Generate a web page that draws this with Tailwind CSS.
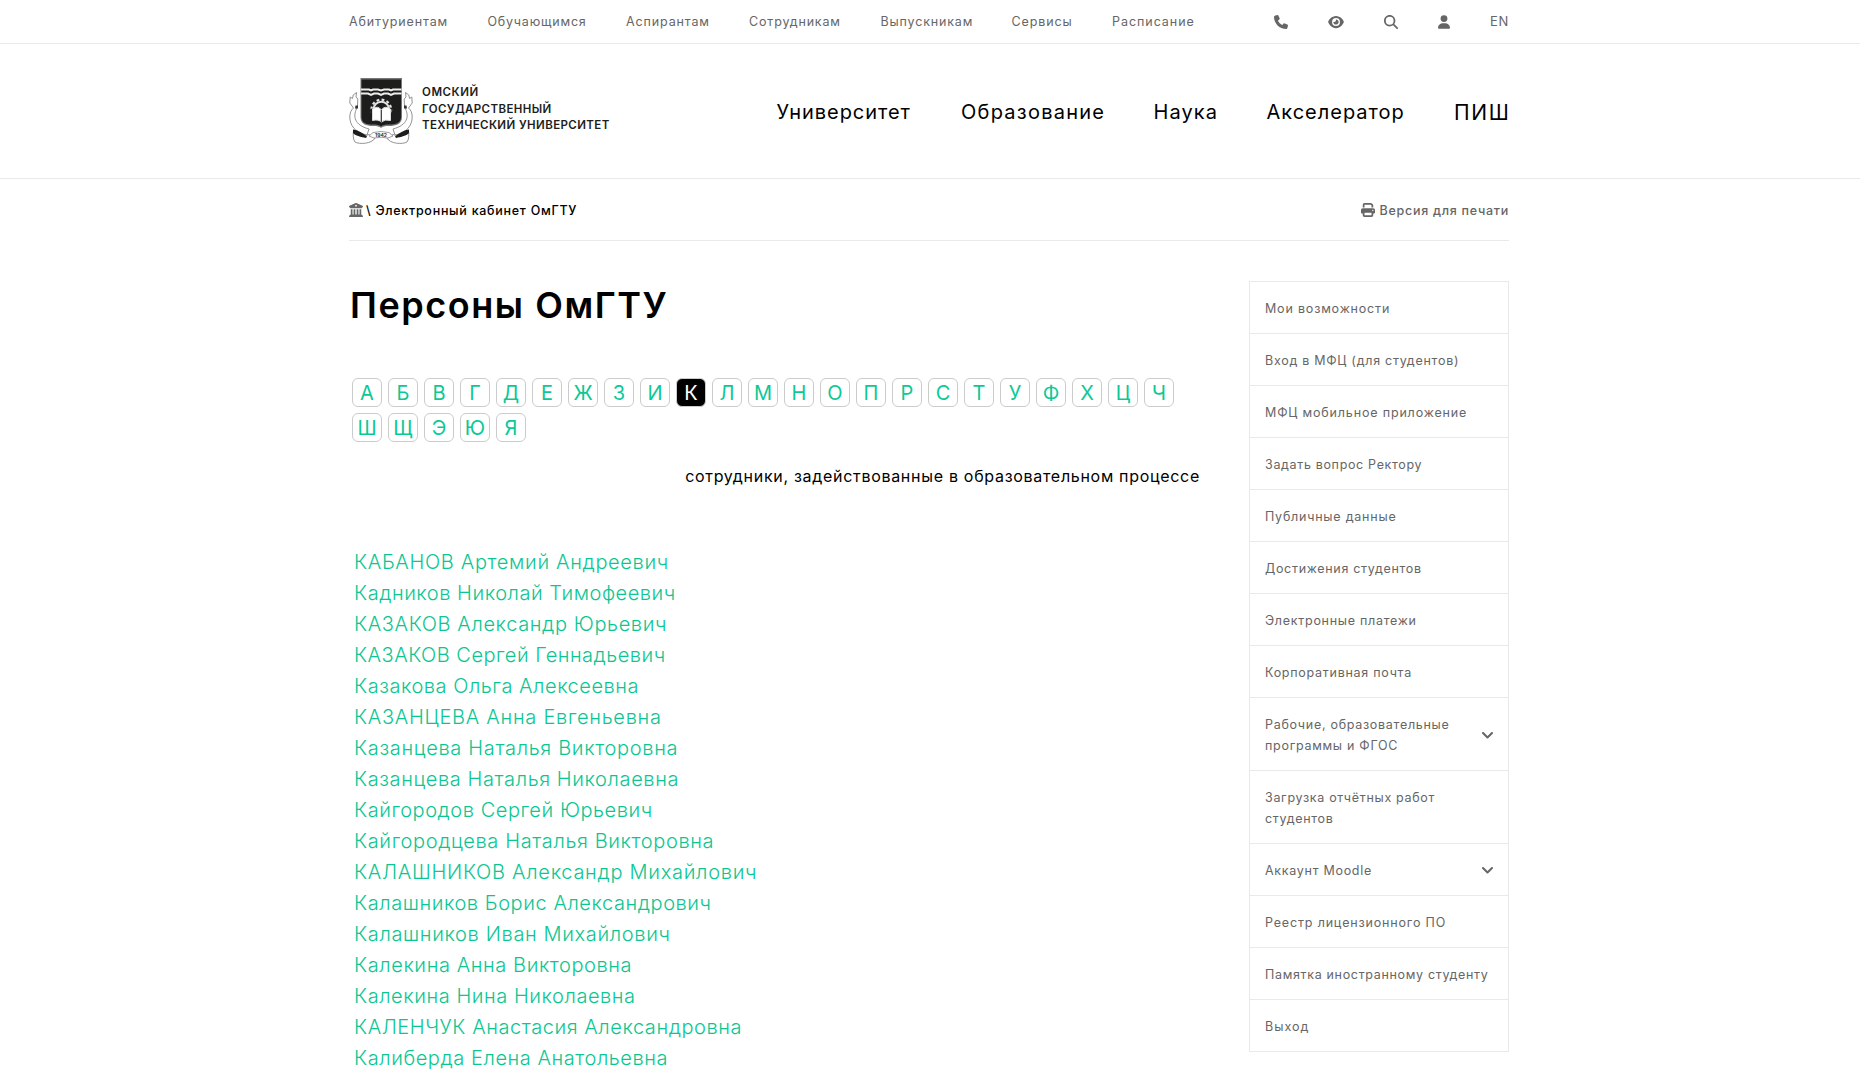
<!DOCTYPE html>
<html lang="ru">
<head>
<meta charset="utf-8">
<title>Персоны ОмГТУ</title>
<script src="https://cdn.jsdelivr.net/npm/@tailwindcss/browser@4"></script>
</head>
<body class="h-[1077px] overflow-hidden bg-white font-['Inter',sans-serif] text-black">

<div class="h-[44px] border-b border-[#e8e9ea]">
  <div class="mx-auto flex h-full w-[1160px] items-center -translate-x-px text-[12.5px] whitespace-nowrap text-[#666]">
    <a class="w-[138.5px] pt-[2px] tracking-[.87px]">Абитуриентам</a>
    <a class="w-[138.5px] pt-[2px] tracking-[.8px]">Обучающимся</a>
    <a class="w-[123px] pt-[2px] tracking-[.87px]">Аспирантам</a>
    <a class="w-[131.5px] pt-[2px] tracking-[.84px]">Сотрудникам</a>
    <a class="w-[131px] pt-[2px] tracking-[.84px]">Выпускникам</a>
    <a class="w-[100.5px] pt-[2px] tracking-[.9px]">Сервисы</a>
    <a class="pt-[2px] tracking-[.95px]">Расписание</a>
    <div class="ml-auto flex items-center">
      <svg class="mr-10 size-[14px]" viewBox="0 0 512 512" fill="currentColor"><path d="M164.9 24.6c-7.7-18.6-28-28.5-47.4-23.2l-88 24C12.1 30.2 0 46 0 64C0 311.4 200.6 512 448 512c18 0 33.8-12.1 38.6-29.5l24-88c5.3-19.4-4.6-39.7-23.2-47.4l-96-40c-16.3-6.8-35.2-2.1-46.3 11.6L304.7 368C234.3 334.7 177.3 277.7 144 207.3L193.3 167c13.7-11.2 18.4-30 11.6-46.3l-40-96z"/></svg>
      <svg class="mr-10 h-[14px] w-[16px]" viewBox="0 0 576 512" fill="currentColor"><path d="M288 32c-80.8 0-145.5 36.8-192.6 80.6C48.6 156 17.3 208 2.5 243.7c-3.3 7.9-3.3 16.7 0 24.6C17.3 304 48.6 356 95.4 399.4C142.5 443.2 207.2 480 288 480s145.5-36.8 192.6-80.6c46.8-43.5 78.1-95.4 93-131.1c3.3-7.9 3.3-16.7 0-24.6c-14.9-35.7-46.2-87.7-93-131.1C433.5 68.8 368.8 32 288 32zM144 256a144 144 0 1 1 288 0 144 144 0 1 1 -288 0zm144-64c0 35.3-28.7 64-64 64c-7.1 0-13.9-1.2-20.3-3.3c-5.5-1.8-11.9 1.6-11.7 7.4c.3 6.9 1.3 13.8 3.2 20.7c13.7 51.2 66.4 81.6 117.6 67.9s81.6-66.4 67.9-117.6c-11.1-41.5-47.8-69.4-88.6-71.1c-5.8-.2-9.2 6.1-7.4 11.7c2.1 6.4 3.3 13.2 3.3 20.3z"/></svg>
      <svg class="mr-10 size-[14px]" viewBox="0 0 512 512" fill="currentColor"><path d="M416 208c0 45.900-14.900 88.300-40 122.700L502.600 457.400c12.500 12.500 12.500 32.800 0 45.300s-32.800 12.500-45.300 0L330.700 376c-34.400 25.200-76.800 40-122.700 40C93.100 416 0 322.900 0 208S93.100 0 208 0S416 93.100 416 208zM208 352a144 144 0 1 0 0-288 144 144 0 1 0 0 288z"/></svg>
      <svg class="mr-10 h-[14px] w-[12px]" viewBox="0 0 448 512" fill="currentColor"><path d="M224 256A128 128 0 1 0 224 0a128 128 0 1 0 0 256zm-45.7 48C79.8 304 0 383.8 0 482.3C0 498.7 13.3 512 29.7 512H418.3c16.4 0 29.7-13.3 29.7-29.7C448 383.8 368.2 304 269.7 304H178.3z"/></svg>
      <a class="w-[19px] text-[13px] tracking-[.8px]">EN</a>
    </div>
  </div>
</div>

<header class="h-[135px] border-b border-[#e8e9ea]">
  <div class="mx-auto flex h-full w-[1160px] -translate-x-px items-center">
    <svg class="h-[66px] w-[64px]" viewBox="0 0 64 66" fill="none">
      <g stroke="#777" stroke-width=".8" fill="#fff">
        <path d="M4.500 30 0.800 25 1.200 19 3.500 20.500 4.200 17 7.500 14.500 7 19 8.800 21 8.500 28 7.500 31C4 38 5 47 20 51L18 57C6 55 .8 47 .8 39 .8 35 2 32 4.500 30Z"/>
        <path d="M59.500 30 63.200 25 62.800 19 60.500 20.500 59.800 17 56.500 14.500 57 19 55.200 21 55.500 28 56.500 31C60 38 59 47 44 51L46 57C58 55 63.200 47 63.200 39 63.200 35 62 32 59.500 30Z"/>
        <path d="M4.500 52.500C11 58 15 58.500 20 56.500L26 60C23 66 10 66.500 6 64 4 62 4 56 4.500 52.500Z"/>
        <path d="M59.500 52.500C53 58 49 58.500 44 56.500L38 60C41 66 54 66.500 58 64 60 62 60 56 59.500 52.500Z"/>
      </g>
      <path d="M4 51.500C9 52 14 55 18 58.500L17 60C12 59 6 57.500 4 55ZM60 51.500C55 52 50 55 46 58.500L47 60C52 59 58 57.500 60 55Z" fill="#1d1d1b"/>
      <path d="M6.500 27.500H9V30.500H6ZM57.500 27.500H55V30.500H58Z" fill="#333"/>
      <path d="M11.500 0H53V39C53 46 47 48 40 48 36 48 33.500 48.500 32 50 30.500 48.500 28 48 24 48 17 48 11.500 46 11.500 39Z" fill="#777"/>
      <path d="M12.500 1.500H52V39C52 45 47 46.500 40 46.500 36 46.500 33.500 47 32 48.500 30.500 47 28 46.500 24 46.500 17 46.500 12.500 45 12.500 39Z" fill="#1d1d1b"/>
      <path d="M12 11.500H20L22 12.500 24 11.500H29L32 12.500 35 11.500H40L42 12.500 44 11.500H52.500M12 15.500H19L22 17 25 15.500H29L32 17 35 15.500H39L42 17 45 15.500H52.500" stroke="#eee" stroke-width="2"/>
      <circle cx="32.300" cy="31.500" r="9.800" stroke="#e4e4e4" stroke-width="2.200" stroke-dasharray="2.800 2.330"/>
      <circle cx="32.300" cy="31.500" r="7.800" stroke="#e4e4e4" stroke-width="2"/>
      <path d="M22 30.500 32.300 32 42.500 30.500V43.500L32.300 45.500 22 43.500Z" fill="#1d1d1b"/>
      <path d="M23.500 31Q29 27 32.300 32 36 27 41.500 31V42.500Q36 41 32.300 44 29 41 23.500 42.500Z" fill="#fff" stroke="#ddd"/>
      <path d="M32.300 32V44" stroke="#333" stroke-width="1.200"/>
      <path d="M20 58 24 54.500Q32 52.500 40 54.500L44 58 39 60Q32 58.500 25 60Z" fill="#fff" stroke="#888" stroke-width=".8"/>
      <text x="26" y="58.800" class="font-['Inter'] text-[5px] font-bold" fill="#333">1942</text>
    </svg>
    <div class="-mt-[4px] ml-[9px] text-[11.5px] leading-[16.8px] font-semibold whitespace-nowrap text-[#1d1d1b]">
      <div class="tracking-[.55px]">ОМСКИЙ</div>
      <div class="tracking-[.38px]">ГОСУДАРСТВЕННЫЙ</div>
      <div class="tracking-[.4px]">ТЕХНИЧЕСКИЙ УНИВЕРСИТЕТ</div>
    </div>
    <nav class="mt-[3px] ml-auto flex text-[20px] whitespace-nowrap">
      <a class="w-[184.5px] tracking-[.95px]">Университет</a>
      <a class="w-[192.5px] tracking-[1.25px]">Образование</a>
      <a class="w-[113px] tracking-[1.1px]">Наука</a>
      <a class="w-[187.500px] tracking-[.99px]">Акселератор</a>
      <a class="w-[55px] text-[21px] tracking-[1.700px]">ПИШ</a>
    </nav>
  </div>
</header>

<div class="mx-auto w-[1160px] -translate-x-px">
  <div class="flex h-[62px] items-center justify-between border-b border-[#e8e9ea] pt-px text-[12.5px] font-medium whitespace-nowrap">
    <div class="flex items-center">
      <svg class="size-[14px] text-[#666]" viewBox="0 0 512 512" fill="currentColor"><path fill-rule="evenodd" d="M243.400 2.600l-224 96c-14 6-21.800 21-18.700 35.800S16.800 160 32 160v8c0 13.300 10.700 24 24 24H456c13.300 0 24-10.700 24-24v-8c15.200 0 28.300-10.700 31.300-25.600s-4.800-29.900-18.700-35.800l-224-96c-8-3.400-17.200-3.400-25.200 0zM128 224H64V420.300c-.6 .3-1.200 .7-1.800 1.100l-48 32c-11.700 7.800-17 22.400-12.900 35.900S17.900 512 32 512H480c14.100 0 26.500-9.200 30.600-22.700s-1.100-28.100-12.900-35.900l-48-32c-.6-.4-1.200-.7-1.800-1.100V224H384V416H344V224H280V416H232V224H168V416H128V224zM256 64a32 32 0 1 1 0 64 32 32 0 1 1 0-64z"/></svg>
      <span class="ml-[3px] pt-[2px] tracking-[.72px]">\ Электронный кабинет ОмГТУ</span>
    </div>
    <a class="flex items-center text-[#666]">
      <svg class="mr-[5px] size-[14px]" viewBox="0 0 512 512" fill="currentColor"><path d="M128 0C92.700 0 64 28.700 64 64v96h64V64H354.700L384 93.300V160h64V93.300c0-17-6.700-33.300-18.700-45.300L400 18.700C388 6.700 371.700 0 354.700 0H128zM384 352v32 64H128V384 368 352H384zm64 32h32c17.700 0 32-14.300 32-32V256c0-35.300-28.700-64-64-64H64c-35.300 0-64 28.700-64 64v96c0 17.700 14.300 32 32 32H64v64c0 35.300 28.700 64 64 64H384c35.300 0 64-28.700 64-64V384zM432 248a24 24 0 1 1 0 48 24 24 0 1 1 0-48z"/></svg>
      <span class="pt-[2px] tracking-[.73px]">Версия для печати</span>
    </a>
  </div>

  <div class="flex items-start justify-between pt-10">
    <main class="w-[852px]">
      <h1 class="h-[48px] pl-px text-[36px] leading-[48px] font-semibold tracking-[1.55px]">Персоны ОмГТУ</h1>
      <div class="mt-[49px] flex flex-wrap gap-x-[6px] gap-y-[6px] pl-[3px] text-[20px] leading-[29px] text-[#0bc996] *:h-[29px] *:w-[30px] *:rounded-[6px] *:border *:border-[#ccc] *:text-center">
        <a>А</a><a>Б</a><a>В</a><a>Г</a><a>Д</a><a>Е</a><a>Ж</a><a>З</a><a>И</a><a class="bg-black text-white">К</a><a>Л</a><a>М</a><a>Н</a><a>О</a><a>П</a><a>Р</a><a>С</a><a>Т</a><a>У</a><a>Ф</a><a>Х</a><a>Ц</a><a>Ч</a><a>Ш</a><a>Щ</a><a>Э</a><a>Ю</a><a>Я</a>
      </div>
      <p class="mt-[22px] h-[24px] pr-px text-right text-[16px] leading-[24px] tracking-[.7px]">сотрудники, задействованные в образовательном процессе</p>
      <ul class="mt-[59px] pl-[5px] text-[20px] leading-[31px] font-[340] whitespace-nowrap text-[#0bc692]">
        <li class="tracking-[.67px]">КАБАНОВ Артемий Андреевич</li>
        <li class="tracking-[.54px]">Кадников Николай Тимофеевич</li>
        <li class="tracking-[.62px]">КАЗАКОВ Александр Юрьевич</li>
        <li class="tracking-[.5px]">КАЗАКОВ Сергей Геннадьевич</li>
        <li class="tracking-[.54px]">Казакова Ольга Алексеевна</li>
        <li class="tracking-[.73px]">КАЗАНЦЕВА Анна Евгеньевна</li>
        <li class="tracking-[.68px]">Казанцева Наталья Викторовна</li>
        <li class="tracking-[.61px]">Казанцева Наталья Николаевна</li>
        <li class="tracking-[.55px]">Кайгородов Сергей Юрьевич</li>
        <li class="tracking-[.63px]">Кайгородцева Наталья Викторовна</li>
        <li class="tracking-[.72px]">КАЛАШНИКОВ Александр Михайлович</li>
        <li class="tracking-[.57px]">Калашников Борис Александрович</li>
        <li class="tracking-[.65px]">Калашников Иван Михайлович</li>
        <li class="tracking-[.59px]">Калекина Анна Викторовна</li>
        <li class="tracking-[.56px]">Калекина Нина Николаевна</li>
        <li class="tracking-[.56px]">КАЛЕНЧУК Анастасия Александровна</li>
        <li class="tracking-[.57px]">Калиберда Елена Анатольевна</li>
      </ul>
    </main>

    <aside class="w-[260px] border border-[#e8e9ea] text-[12.5px] leading-[21px] whitespace-nowrap text-[#666] divide-y divide-[#e8e9ea] *:px-[15px] *:pt-[16px] *:pb-[14px]">
      <div class="tracking-[.82px]">Мои возможности</div>
      <div class="tracking-[.73px]">Вход в МФЦ (для студентов)</div>
      <div class="tracking-[.84px]">МФЦ мобильное приложение</div>
      <div class="tracking-[.66px]">Задать вопрос Ректору</div>
      <div class="tracking-[.77px]">Публичные данные</div>
      <div class="tracking-[.69px]">Достижения студентов</div>
      <div class="tracking-[.72px]">Электронные платежи</div>
      <div class="tracking-[.73px]">Корпоративная почта</div>
      <div class="flex items-center justify-between tracking-[.71px]"><span>Рабочие, образовательные<br>программы и ФГОС</span>
        <svg class="h-[7px] w-[11px]" viewBox="0 0 11 7" fill="none" stroke="currentColor" stroke-width="2" stroke-linecap="round" stroke-linejoin="round"><path d="M1 1l4.500 4.500L10 1"/></svg></div>
      <div class="tracking-[.68px]">Загрузка отчётных работ<br>студентов</div>
      <div class="flex items-center justify-between tracking-[.71px]"><span>Аккаунт Moodle</span>
        <svg class="h-[7px] w-[11px]" viewBox="0 0 11 7" fill="none" stroke="currentColor" stroke-width="2" stroke-linecap="round" stroke-linejoin="round"><path d="M1 1l4.500 4.500L10 1"/></svg></div>
      <div class="tracking-[.83px]">Реестр лицензионного ПО</div>
      <div class="tracking-[.67px]">Памятка иностранному студенту</div>
      <div class="tracking-[1px]">Выход</div>
    </aside>
  </div>
</div>
</body>
</html>
